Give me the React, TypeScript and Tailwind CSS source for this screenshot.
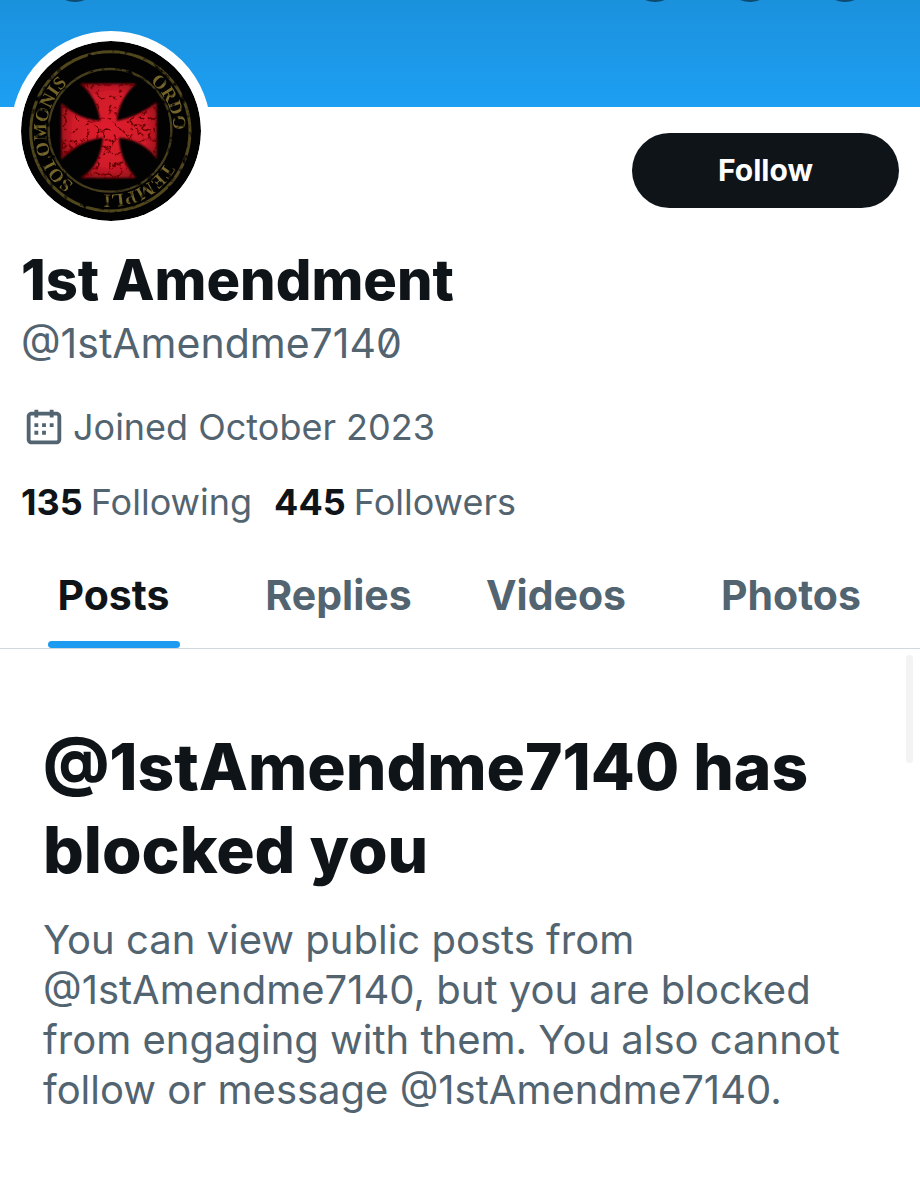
import React from "react";

const HANDLE = "@1stAmendme7140";
const TABS = ["Posts", "Replies", "Videos", "Photos"];

function Avatar() {
  return (
    <svg viewBox="0 0 540 540" className="block size-full" role="img" aria-label="Profile picture">
      <defs>
        <path id="ring" d="M267 79a191 191 0 0 1 0 382a191 191 0 0 1 0 -382" />
        <filter id="stone" x="-5%" y="-5%" width="110%" height="110%">
          <feTurbulence type="turbulence" baseFrequency="0.03" numOctaves="5" seed="8" result="n" />
          <feColorMatrix in="n" type="matrix" values="0 0 0 0 0.12  0 0 0 0 0  0 0 0 0 0  -8 0 0 0 1.9" result="cracks" />
          <feGaussianBlur in="SourceGraphic" stdDeviation="3" result="soft" />
          <feComposite in="cracks" in2="soft" operator="in" result="c" />
          <feMerge>
            <feMergeNode in="soft" />
            <feMergeNode in="c" />
          </feMerge>
        </filter>
        <filter id="worn" x="-5%" y="-5%" width="110%" height="110%">
          <feTurbulence type="fractalNoise" baseFrequency="0.05" numOctaves="3" seed="3" result="n" />
          <feColorMatrix in="n" type="matrix" values="0 0 0 0 0  0 0 0 0 0  0 0 0 0 0  4 0 0 0 -0.9" result="m" />
          <feComposite in="SourceGraphic" in2="m" operator="in" result="w" />
          <feGaussianBlur in="w" stdDeviation="2" />
        </filter>
        <radialGradient id="red" cx="267" cy="265" r="190" gradientUnits="userSpaceOnUse">
          <stop offset="0" stopColor="#e0202e" />
          <stop offset="0.6" stopColor="#cf1a29" />
          <stop offset="1" stopColor="#5a090d" />
        </radialGradient>
      </defs>
      <rect width="540" height="540" fill="#020202" />
      <g filter="url(#worn)">
        <circle cx="268" cy="271" r="239" fill="none" stroke="#51461f" strokeWidth="9" />
        <circle cx="267" cy="268" r="184" fill="none" stroke="#453c1c" strokeWidth="7" />
        <g fill="#74652c" fontFamily="Liberation Serif, serif" fontSize="56" fontWeight="700">
          <text><textPath href="#ring" startOffset="130">ORDO</textPath></text>
          <text><textPath href="#ring" startOffset="398">TEMPLI</textPath></text>
          <text><textPath href="#ring" startOffset="715">SOLOMONIS</textPath></text>
        </g>
      </g>
      <path
        filter="url(#stone)"
        fill="url(#red)"
        d="M178 128H346Q294 172 287 240Q352 228 407 184V354Q366 296 294 290Q298 362 346 411H178Q238 378 246 290Q176 296 121 356V185Q170 234 238 240Q228 168 178 128Z"
      />
    </svg>
  );
}

function CalendarIcon() {
  return (
    <svg viewBox="0 0 24 24" className="size-[46px] shrink-0" fill="currentColor" aria-hidden="true">
      <path d="M7 4V3h2v1h6V3h2v1h1.5C19.89 4 21 5.12 21 6.5v12c0 1.38-1.11 2.5-2.5 2.5h-13C4.12 21 3 19.88 3 18.5v-12C3 5.12 4.12 4 5.5 4H7zm0 2H5.5c-.27 0-.5.22-.5.5v12c0 .28.23.5.5.5h13c.28 0 .5-.22.5-.5v-12c0-.28-.22-.5-.5-.5H17v1h-2V6H9v1H7V6zm0 6h2v-2H7v2zm0 4h2v-2H7v2zm4-4h2v-2h-2v2zm0 4h2v-2h-2v2zm4-4h2v-2h-2v2z" />
    </svg>
  );
}

export default function App() {
  return (
    <div className="min-h-screen bg-white font-['Inter',sans-serif] text-[#0f1419]">
      <div className="relative h-[107px] overflow-hidden bg-linear-to-b from-[#1b91dc] to-[#1d9ff3]">
        <div className="absolute inset-x-[51px] -top-[46px] flex items-center gap-[47px]">
          <span className="mr-auto size-12 rounded-full bg-[#0d4a70]" />
          <span className="size-12 rounded-full bg-[#0d4a70]" />
          <span className="size-12 rounded-full bg-[#0d4a70]" />
          <span className="size-12 rounded-full bg-[#0d4a70]" />
        </div>
      </div>

      <header className="px-[21px]">
        <div className="flex items-start justify-between">
          <div className="relative -mt-[76px] -ml-[10px] size-[200px] overflow-hidden rounded-full border-[10px] border-white bg-white">
            <div className="size-full overflow-hidden rounded-full">
              <Avatar />
            </div>
          </div>
          <button type="button" className="mt-[26px] h-[75px] w-[267px] rounded-full bg-[#0f1419] text-[30px] font-bold text-white">
            Follow
          </button>
        </div>

        <h1 className="mt-[14px] text-[56px] leading-[70px] font-extrabold">1st Amendment</h1>
        <p className="text-[41px] leading-[56px] text-[#536471] slashed-zero">{HANDLE}</p>

        <p className="mt-[33px] flex items-center gap-[6px] text-[36px] leading-[46px] text-[#536471]">
          <CalendarIcon />
          Joined October 2023
        </p>

        <div className="mt-[28px] flex gap-[22px] text-[36px] leading-[48px]">
          <a href="#following" className="flex gap-[8px]">
            <span className="font-bold">135</span>
            <span className="text-[#536471]">Following</span>
          </a>
          <a href="#followers" className="flex gap-[8px]">
            <span className="font-bold">445</span>
            <span className="text-[#536471]">Followers</span>
          </a>
        </div>
      </header>

      <nav className="mt-[16px] grid grid-cols-[227fr_223fr_212fr_258fr] border-b border-[#cfd9de]">
        {TABS.map((tab, i) => (
          <a
            key={tab}
            href={"#" + tab.toLowerCase()}
            aria-current={i === 0 ? "page" : undefined}
            className={
              i === 0
                ? "flex flex-col items-center text-[41px] font-bold"
                : "flex flex-col items-center text-[41px] font-bold text-[#536471]"
            }
          >
            <span className="pt-[25px] pb-[18px] leading-[56px]">{tab}</span>
            <span className={i === 0 ? "h-[7px] w-[132px] rounded-full bg-[#1d9bf0]" : "h-[7px]"} />
          </a>
        ))}
      </nav>

      <main className="relative px-[43px] pt-[76px]">
        <div className="absolute top-[6px] right-[7px] h-[108px] w-[7px] rounded-full bg-[#f3f3f3]" />
        <h2 className="text-[64px] leading-[83px] font-extrabold">{`${HANDLE} has blocked you`}</h2>
        <p className="mt-[24px] text-[40px] leading-[50px] text-[#536471]">
          {`You can view public posts from ${HANDLE}, but you are blocked from engaging with them. You also cannot follow or message ${HANDLE}.`}
        </p>
      </main>
    </div>
  );
}
